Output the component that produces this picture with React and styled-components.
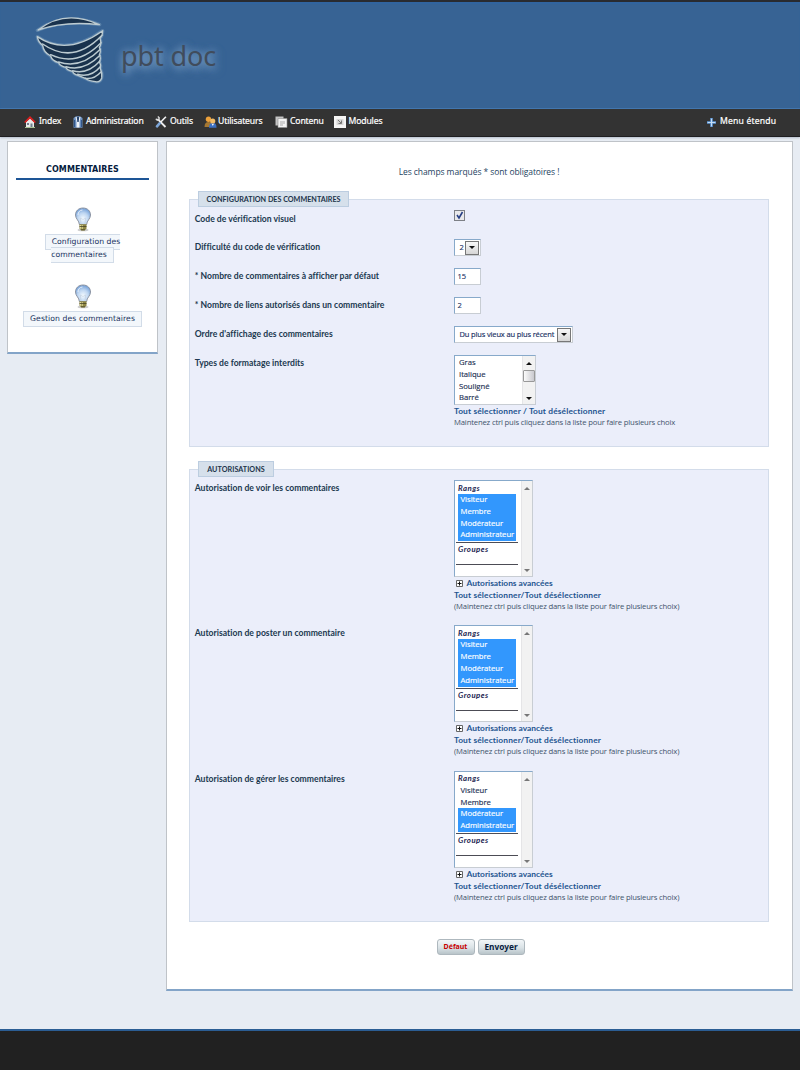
import React from "react";
import styled, { createGlobalStyle, css } from "styled-components";

const Global = createGlobalStyle`
  * { box-sizing: border-box; }
  body { margin: 0; background: #e7ecf3; font-family: Lato, "Open Sans", sans-serif; font-size: 8.5px; color: #16324f; font-variant-ligatures: none; }
`;

const Page = styled.div`width: 800px; height: 1070px; display: flex; flex-direction: column; overflow: hidden;`;

const Header = styled.header`
  height: 109px; flex: none; display: flex; align-items: flex-start; padding-left: 30px;
  background: #376394; border-top: 2px solid #292b30; border-bottom: 1px solid #3a70ad;
  box-shadow: inset 0 2px 1px #31649f;
`;
const LogoBox = styled.div`width: 80px; height: 80px; margin-top: 8px;`;
const SiteName = styled.div`
  margin: 34px 0 0 11px; font: 27px/40px "Noto Sans", sans-serif; color: #404c5c; letter-spacing: -0.1px;
  text-shadow: 0 0 8px rgba(145, 180, 215, 0.75), 2px 3px 10px rgba(145, 180, 215, 0.7);
`;

const Nav = styled.nav`
  height: 28px; flex: none; display: flex; align-items: center; padding: 0 24px 3px;
  background: #333; border-bottom: 1px solid #1f1f21; color: #fff;
  font: 8.6px/14px "Noto Sans", sans-serif; box-shadow: 0 1px 2px #b4bdca;
`;
const NavItem = styled.div`
  display: flex; align-items: center; gap: ${(p) => p.$gap ?? 3}px; width: ${(p) => p.$w}px;
  margin-left: ${(p) => (p.$end ? "auto" : 0)}; white-space: nowrap; letter-spacing: ${(p) => p.$ls ?? -0.12}px;
  -webkit-text-stroke: 0.2px #fff;
  svg { flex: none; position: relative; top: 1px; }
`;

const Columns = styled.div`flex: 1; display: flex; align-items: flex-start; gap: 8px; padding: 4px 7px 0;`;
const Panel = styled.section`background: #fff; border: 1px solid #bfc3c8; border-bottom: 2px solid #83a4c8;`;
const Side = styled(Panel)`
  width: 151px; height: 213px; padding: 21px 8px 0; display: flex; flex-direction: column; align-items: center;
`;
const SideTitle = styled.h2`
  margin: 0; width: 133px; height: 17px; text-align: center; border-bottom: 2px solid #1d5596; color: #061c40;
  font: bold 8px/14px "DejaVu Sans", sans-serif; letter-spacing: 0.06px;
`;
const SideEntry = styled.div`
  margin-top: ${(p) => p.$top}px; width: ${(p) => p.$w}px; display: flex; flex-direction: column; align-items: center;
`;
const LinkWrap = styled.div`
  margin-top: ${(p) => p.$top}px; font: 7.7px/12.8px "DejaVu Sans", sans-serif; text-align: center;
  letter-spacing: ${(p) => p.$ls}px;
`;
const SideLink = styled.a`
  padding: 2px 6px 3px; border: 1px solid #d2dce8; background: #f3f7fb; color: #193260;
  white-space: ${(p) => (p.$one ? "nowrap" : "normal")};
`;

const Main = styled(Panel)`
  width: 627px; height: 850px; padding: 23px 23px 0 22px; display: flex; flex-direction: column;
`;
const Required = styled.p`
  margin: 0; height: 34px; text-align: center; font: 8.5px/14px "Open Sans", sans-serif; color: #24435f;
  letter-spacing: -0.08px;
`;
const Fieldset = styled.section`
  height: ${(p) => p.$h}px; margin-bottom: ${(p) => p.$mb}px; width: 580px; background: #ebeefa;
  border: 1px solid #d3dcea; padding: 0 4px;
`;
const Legend = styled.h3`
  width: ${(p) => p.$w}px; height: 16px; margin: -9px 0 ${(p) => p.$mb ?? 0}px 4px; text-align: center; white-space: nowrap;
  background: #d6e0eb; border: 1px solid #bccde0; color: #22344a;
  font: bold 7.2px/15px Lato, sans-serif; letter-spacing: ${(p) => p.$ls}px;
`;
const Row = styled.div`
  display: grid; grid-template-columns: 260px 1fr; align-items: start; height: ${(p) => p.$h ?? 29}px;
`;
const Label = styled.label`
  font: bold 8.6px/14px Lato, sans-serif; color: #20384f; white-space: nowrap; margin-top: ${(p) => p.$top ?? 5}px;
  padding-left: 0.7px; letter-spacing: 0.015px;
`;
const box = css`background: #fff; border: 1px solid #c8cdd3; border-top-color: #87a9ca; border-left-color: #87a9ca;`;
const Field = styled.div`
  ${box} width: ${(p) => p.$w ?? 27}px; height: 17px; padding: 0 1px 0 ${(p) => p.$pl ?? 4.5}px; display: flex;
  align-items: center; justify-content: space-between; margin-top: 4px; color: #182f63; white-space: nowrap;
  font: 7.5px/15px "Open Sans", sans-serif; letter-spacing: -0.14px; -webkit-text-stroke: 0.15px #182f63;
`;
const DropButton = styled.span`
  width: 14px; height: 14px; display: grid; place-items: center; border: 1px solid #777;
  background: linear-gradient(#f8f8f8, #d6d6d6);
`;
const Checkbox = styled.span`
  display: block; width: 11px; height: 11px; margin-top: 3px; border: 1px solid #7d8086; background: #e9e9eb;
  svg { display: block; }
`;
const ListBox = styled.div`
  ${box} width: ${(p) => p.$w}px; height: ${(p) => p.$h}px; display: flex; margin-top: ${(p) => p.$top ?? 0}px;
`;
const Options = styled.div`
  flex: 1; padding: ${(p) => p.$pad}; font: 7.7px/11.8px "Open Sans", sans-serif; color: #1c3053; white-space: nowrap;
`;
const Option = styled.div`
  height: 11.8px; letter-spacing: -0.02px;
  ${(p) => p.$on && "background: #3297fd; color: #fff;"}
  -webkit-text-stroke: 0.15px;
`;
const PermOption = styled(Option)`width: 58px; margin-left: 1px; padding-left: 2.5px;`;
const GroupTitle = styled.div`
  font: italic bold 7.8px/${(p) => p.$lh}px Lato, sans-serif; height: ${(p) => p.$h}px; padding-left: 1px; color: #1a2450;
  letter-spacing: 0.48px;
`;
const Rule = styled.div`height: 1px; background: #4c4c55; margin: ${(p) => p.$m}; width: 62px;`;
const Scroll = styled.div`
  width: 13px; background: #f2f2f2; border-left: 1px solid #e5e5e7; display: flex; flex-direction: column;
  align-items: center; padding: 6px 0 4px;
`;
const Thumb = styled.div`
  width: 12px; height: 12px; margin-top: 5px; border: 1px solid #999; border-radius: 1px;
  background: linear-gradient(90deg, #fbfbfb, #c9c9ce);
`;
const Spacer = styled.div`flex: 1;`;
const Actions = styled.div`
  display: flex; align-items: center; height: 12px; white-space: nowrap; color: #1e5590;
  font: bold 8.4px/12px Lato, sans-serif; letter-spacing: ${(p) => p.$ls ?? 0.14}px;
`;
const Plus = styled.span`display: block; width: 7px; height: 7px; margin: 1px 3.5px 0 2px; svg { display: block; }`;
const Note = styled.div`
  font: 7.7px/11.5px "Open Sans", sans-serif; color: #3f546c; white-space: nowrap; letter-spacing: -0.165px;
`;
const Buttons = styled.div`display: flex; align-items: center; justify-content: center; gap: 3px; padding-left: 3px;`;
const Button = styled.button`
  width: ${(p) => p.$w}px; height: 16px; padding: 0; border: 1px solid #aeb8be; border-radius: 3px;
  background: linear-gradient(#f2f6f8, #dae2e6 55%, #b8c4c9); color: ${(p) => p.$c};
  font: bold ${(p) => p.$fs}px/12px "Noto Sans", sans-serif; margin-top: ${(p) => p.$mt ?? 0}px;
`;
const Footer = styled.footer`height: 41px; flex: none; background: #212121; border-top: 2px solid #2b5d93;`;

const rings = [
  "M38 102 Q130 166 216 76",
  "M62 134 Q142 172 213 98",
  "M86 156 Q152 178 211 118",
  "M108 170 Q162 186 210 136",
  "M128 182 Q172 195 210 153",
  "M143 193 Q182 204 211 170",
  "M166 205 Q192 209 213 186",
];
const silhouette =
  "M22 80 Q110 140 218 62 Q219 74 210 86 Q216 100 208 112 Q214 124 208 134 Q214 146 208 154 Q214 166 211 176 Q218 190 215 204 Q210 218 196 215 Q176 212 168 206 L144 196 Q130 192 128 184 Q110 180 108 172 Q90 168 86 158 Q66 152 62 138 Q40 126 38 106 Q24 96 22 80Z";
const Logo = () => (
  <svg width="80" height="80" viewBox="0 0 240 240">
    <g fill="none" stroke="#7c9fbe" strokeWidth="10" strokeLinejoin="round" opacity=".5">
      <path d="M22 61 Q105 2 209 44 Q105 28 22 61Z" />
      <path d={silhouette} />
    </g>
    <g fill="#19324d" stroke="#bccbd1" strokeWidth="4" strokeLinejoin="round">
      <path d="M24 60 Q105 -4 208 44 Q105 32 24 60Z" />
      <path d={silhouette} />
    </g>
    <g fill="none" stroke="#bccbd1" strokeWidth="4.5" strokeLinecap="round">
      {rings.map((d) => <path key={d} d={d} />)}
    </g>
  </svg>
);

const HomeIcon = () => (
  <svg width="12" height="12" viewBox="0 0 12 12">
    <path d="M2 6 6 2.4 10 6v5.5H2z" fill="#e9e9e9" />
    <path d="M3 7h2v2H3zM6.5 7.5h2v4h-2z" fill="#6f7f8d" />
    <path d="M.7 6.5 6 1.3l5.3 5.2" fill="none" stroke="#dd2020" strokeWidth="1.7" />
    <path d="M1 11.5h10" stroke="#a8c195" />
  </svg>
);
const AdminIcon = () => (
  <svg width="12" height="12" viewBox="0 0 12 12">
    <path d="M1.500 2 4 .3h4L10.500 2v9.800h-9z" fill="#6f93c2" />
    <path d="M3.500 1h5L7.500 6v5.500h-3V6z" fill="#edf2f7" />
    <path d="M4.800 1h2.400L6.700 6H5.300z" fill="#29456d" />
    <path d="M2.600 4v7M9.400 4v7" stroke="#2c5085" />
  </svg>
);
const ToolsIcon = () => (
  <svg width="12" height="12" viewBox="0 0 12 12">
    <path d="M2.500 2.800 10.500 11" stroke="#eee" strokeWidth="1.800" />
    <path d="M.8 2.800 2.200 4.200 4 3.600 4.200 1.800 2.800.6" fill="none" stroke="#ddd" strokeWidth="1.300" />
    <path d="M10.900.8 5.300 6.500" stroke="#f3f3f3" strokeWidth="1.600" />
    <path d="M4.600 7.400 2 10.300" stroke="#7da6d8" strokeWidth="2.600" strokeLinecap="round" />
  </svg>
);
const UsersIcon = () => (
  <svg width="13" height="12" viewBox="0 0 13 12">
    <path d="M.5 11q0-5 4-5t4 5z" fill="#a47732" />
    <path d="M5 11.700q0-5 3.800-5t3.700 5z" fill="#3c70c3" />
    <circle cx="4.500" cy="3.200" r="2.700" fill="#eca13b" /><circle cx="8.700" cy="5" r="2.600" fill="#f4bd67" />
    <path d="m7.800 8 1 2 1-2z" fill="#fff" />
  </svg>
);
const ContentIcon = () => (
  <svg width="13" height="12" viewBox="0 0 13 12">
    <path d="M.5.500h8v9h-8z" fill="#c5c5c5" /><path d="M3 2.500h9v9H3z" fill="#f3f3f3" stroke="#8e8e8e" strokeWidth=".6" />
    <path d="M5 5h5v3H8v2H5z" fill="#cfcfcf" />
  </svg>
);
const ModulesIcon = () => (
  <svg width="12" height="12" viewBox="0 0 12 12">
    <path d="M0 0h12v12H0z" fill="#f5f5f5" /><path d="M2.500 3h7v6h-7z" fill="#d7d7d7" />
    <path d="m4 4 3.200 3.200M7.500 4.500v3h-3" fill="none" stroke="#777" />
  </svg>
);
const PlusIcon = () => (
  <svg width="9" height="9" viewBox="0 0 9 9">
    <path d="M4.500 0v9M0 4.500h9" stroke="#5e98d8" strokeWidth="2.600" /><path d="M4.500.7v7.600M.7 4.500h7.600" stroke="#c5def7" strokeWidth="1" />
  </svg>
);
const Bulb = () => (
  <svg width="18" height="25" viewBox="0 0 18 25">
    <defs>
      <radialGradient id="glass" cx=".5" cy=".65" r=".6">
        <stop offset="0" stopColor="#f4faff" /><stop offset=".6" stopColor="#bdd5f1" /><stop offset="1" stopColor="#7ca6db" />
      </radialGradient>
    </defs>
    <ellipse cx="9" cy="23" rx="5.500" ry="1.300" fill="#ccc" />
    <path d="M9 1C4.300 1 1.500 4.200 1.500 8c0 4 3.700 5.500 3.900 9.600h7.200C12.800 13.500 16.500 12 16.500 8 16.500 4.200 13.700 1 9 1z" fill="url(#glass)" stroke="#858b99" strokeWidth=".9" />
    <path d="M4 8c0-3 1.700-4.700 4.500-5" fill="none" stroke="#fff" opacity=".7" />
    <path d="m7 17-.7-6 2.700 1.500 2.700-1.500-.7 6" fill="none" stroke="#c2cedd" strokeWidth=".6" />
    <path d="M5.500 17.300h7v4.500l-2 1.600h-3l-2-1.600z" fill="#8f8744" />
    <path d="M6.500 18v3.700M8.200 18v4" stroke="#ded899" /><path d="M5.500 19.500h7M7 22.800h4" stroke="#484526" strokeWidth=".8" />
  </svg>
);
const Arrow = ({ up, dim }) => (
  <svg width="6" height="3" viewBox="0 0 6 3"><path d={up ? "M3 0 6 3H0z" : "M0 0h6L3 3z"} fill={dim ? "#777" : "#111"} /></svg>
);
const ExpandIcon = () => (
  <svg width="7" height="7" viewBox="0 0 7 7">
    <path d="M.5.500h6v6h-6z" fill="#fff" stroke="#666" /><path d="M3.500 1.500v4M1.500 3.500h4" stroke="#111" />
  </svg>
);

const ranks = ["Visiteur", "Membre", "Modérateur", "Administrateur"];
const Permission = ({ title, from, h }) => (
  <Row $h={h}>
    <Label $top={1}>{title}</Label>
    <div>
      <ListBox $w={79} $h={97}>
        <Options $pad="1.5px 3px 0 2px">
          <GroupTitle $h={11.5} $lh={11}>Rangs</GroupTitle>
          {ranks.map((rank, i) => <PermOption key={rank} $on={i >= from}>{rank}</PermOption>)}
          <Rule $m="1px 0 0 -1px" />
          <GroupTitle $h={20} $lh={12.5}>Groupes</GroupTitle>
          <Rule $m="1px 0 0 -1px" />
        </Options>
        <Scroll><Arrow up dim /><Spacer /><Arrow dim /></Scroll>
      </ListBox>
      <Actions $ls={0.01}><Plus><ExpandIcon /></Plus>Autorisations avancées</Actions>
      <Actions>Tout sélectionner/Tout désélectionner</Actions>
      <Note>(Maintenez ctrl puis cliquez dans la liste pour faire plusieurs choix)</Note>
    </div>
  </Row>
);

export default function App() {
  return (
    <Page>
      <Global />
      <Header>
        <LogoBox><Logo /></LogoBox>
        <SiteName>pbt doc</SiteName>
      </Header>
      <Nav>
        <NavItem $w={48}><HomeIcon />Index</NavItem>
        <NavItem $w={83} $gap={2} $ls={-0.16}><AdminIcon />Administration</NavItem>
        <NavItem $w={49}><ToolsIcon />Outils</NavItem>
        <NavItem $w={71} $gap={1}><UsersIcon />Utilisateurs</NavItem>
        <NavItem $w={59} $gap={2}><ContentIcon />Contenu</NavItem>
        <NavItem $w={60} $gap={2.5}><ModulesIcon />Modules</NavItem>
        <NavItem $w={69} $gap={4} $ls={0.18} $end><PlusIcon />Menu étendu</NavItem>
      </Nav>
      <Columns>
        <Side>
          <SideTitle>COMMENTAIRES</SideTitle>
          <SideEntry $top={27} $w={77}>
            <Bulb />
            <LinkWrap $top={4} $ls={0.02}><SideLink>Configuration des commentaires</SideLink></LinkWrap>
          </SideEntry>
          <SideEntry $top={22.5} $w={120}>
            <Bulb />
            <LinkWrap $top={4} $ls={0.08}><SideLink $one>Gestion des commentaires</SideLink></LinkWrap>
          </SideEntry>
        </Side>
        <Main>
          <Required>Les champs marqués * sont obligatoires !</Required>
          <Fieldset $h={248} $mb={22}>
            <Legend $w={151} $ls={0}>CONFIGURATION DES COMMENTAIRES</Legend>
            <Row $h={28}>
              <Label>Code de vérification visuel</Label>
              <Checkbox><svg width="9" height="9" viewBox="0 0 9 9"><path d="m2 4 2 3 3.500-6" fill="none" stroke="#273f83" strokeWidth="1.600" /></svg></Checkbox>
            </Row>
            <Row><Label>Difficulté du code de vérification</Label><Field>2<DropButton><Arrow /></DropButton></Field></Row>
            <Row><Label>* Nombre de commentaires à afficher par défaut</Label><Field $pl={2.5}>15</Field></Row>
            <Row><Label>* Nombre de liens autorisés dans un commentaire</Label><Field $pl={2.5}>2</Field></Row>
            <Row><Label>Ordre d'affichage des commentaires</Label><Field $w={119}>Du plus vieux au plus récent<DropButton><Arrow /></DropButton></Field></Row>
            <Row $h={80}>
              <Label>Types de formatage interdits</Label>
              <div>
                <ListBox $w={82} $h={50} $top={4}>
                  <Options $pad="1px 0 0 4px">{["Gras", "Italique", "Souligné", "Barré"].map((o) => <Option key={o}>{o}</Option>)}</Options>
                  <Scroll><Arrow up /><Thumb /><Spacer /><Arrow /></Scroll>
                </ListBox>
                <Actions>Tout sélectionner / Tout désélectionner</Actions>
                <Note>Maintenez ctrl puis cliquez dans la liste pour faire plusieurs choix</Note>
              </div>
            </Row>
          </Fieldset>
          <Fieldset $h={453} $mb={16}>
            <Legend $w={76} $ls={0.05} $mb={3}>AUTORISATIONS</Legend>
            <Permission title="Autorisation de voir les commentaires" from={0} h={145.4} />
            <Permission title="Autorisation de poster un commentaire" from={0} h={145.4} />
            <Permission title="Autorisation de gérer les commentaires" from={2} h={145} />
          </Fieldset>
          <Buttons>
            <Button $w={38} $fs={7} $c="#c70000" $mt={1}>Défaut</Button>
            <Button $w={47} $fs={8.3} $c="#071b3d">Envoyer</Button>
          </Buttons>
        </Main>
      </Columns>
      <Footer />
    </Page>
  );
}
